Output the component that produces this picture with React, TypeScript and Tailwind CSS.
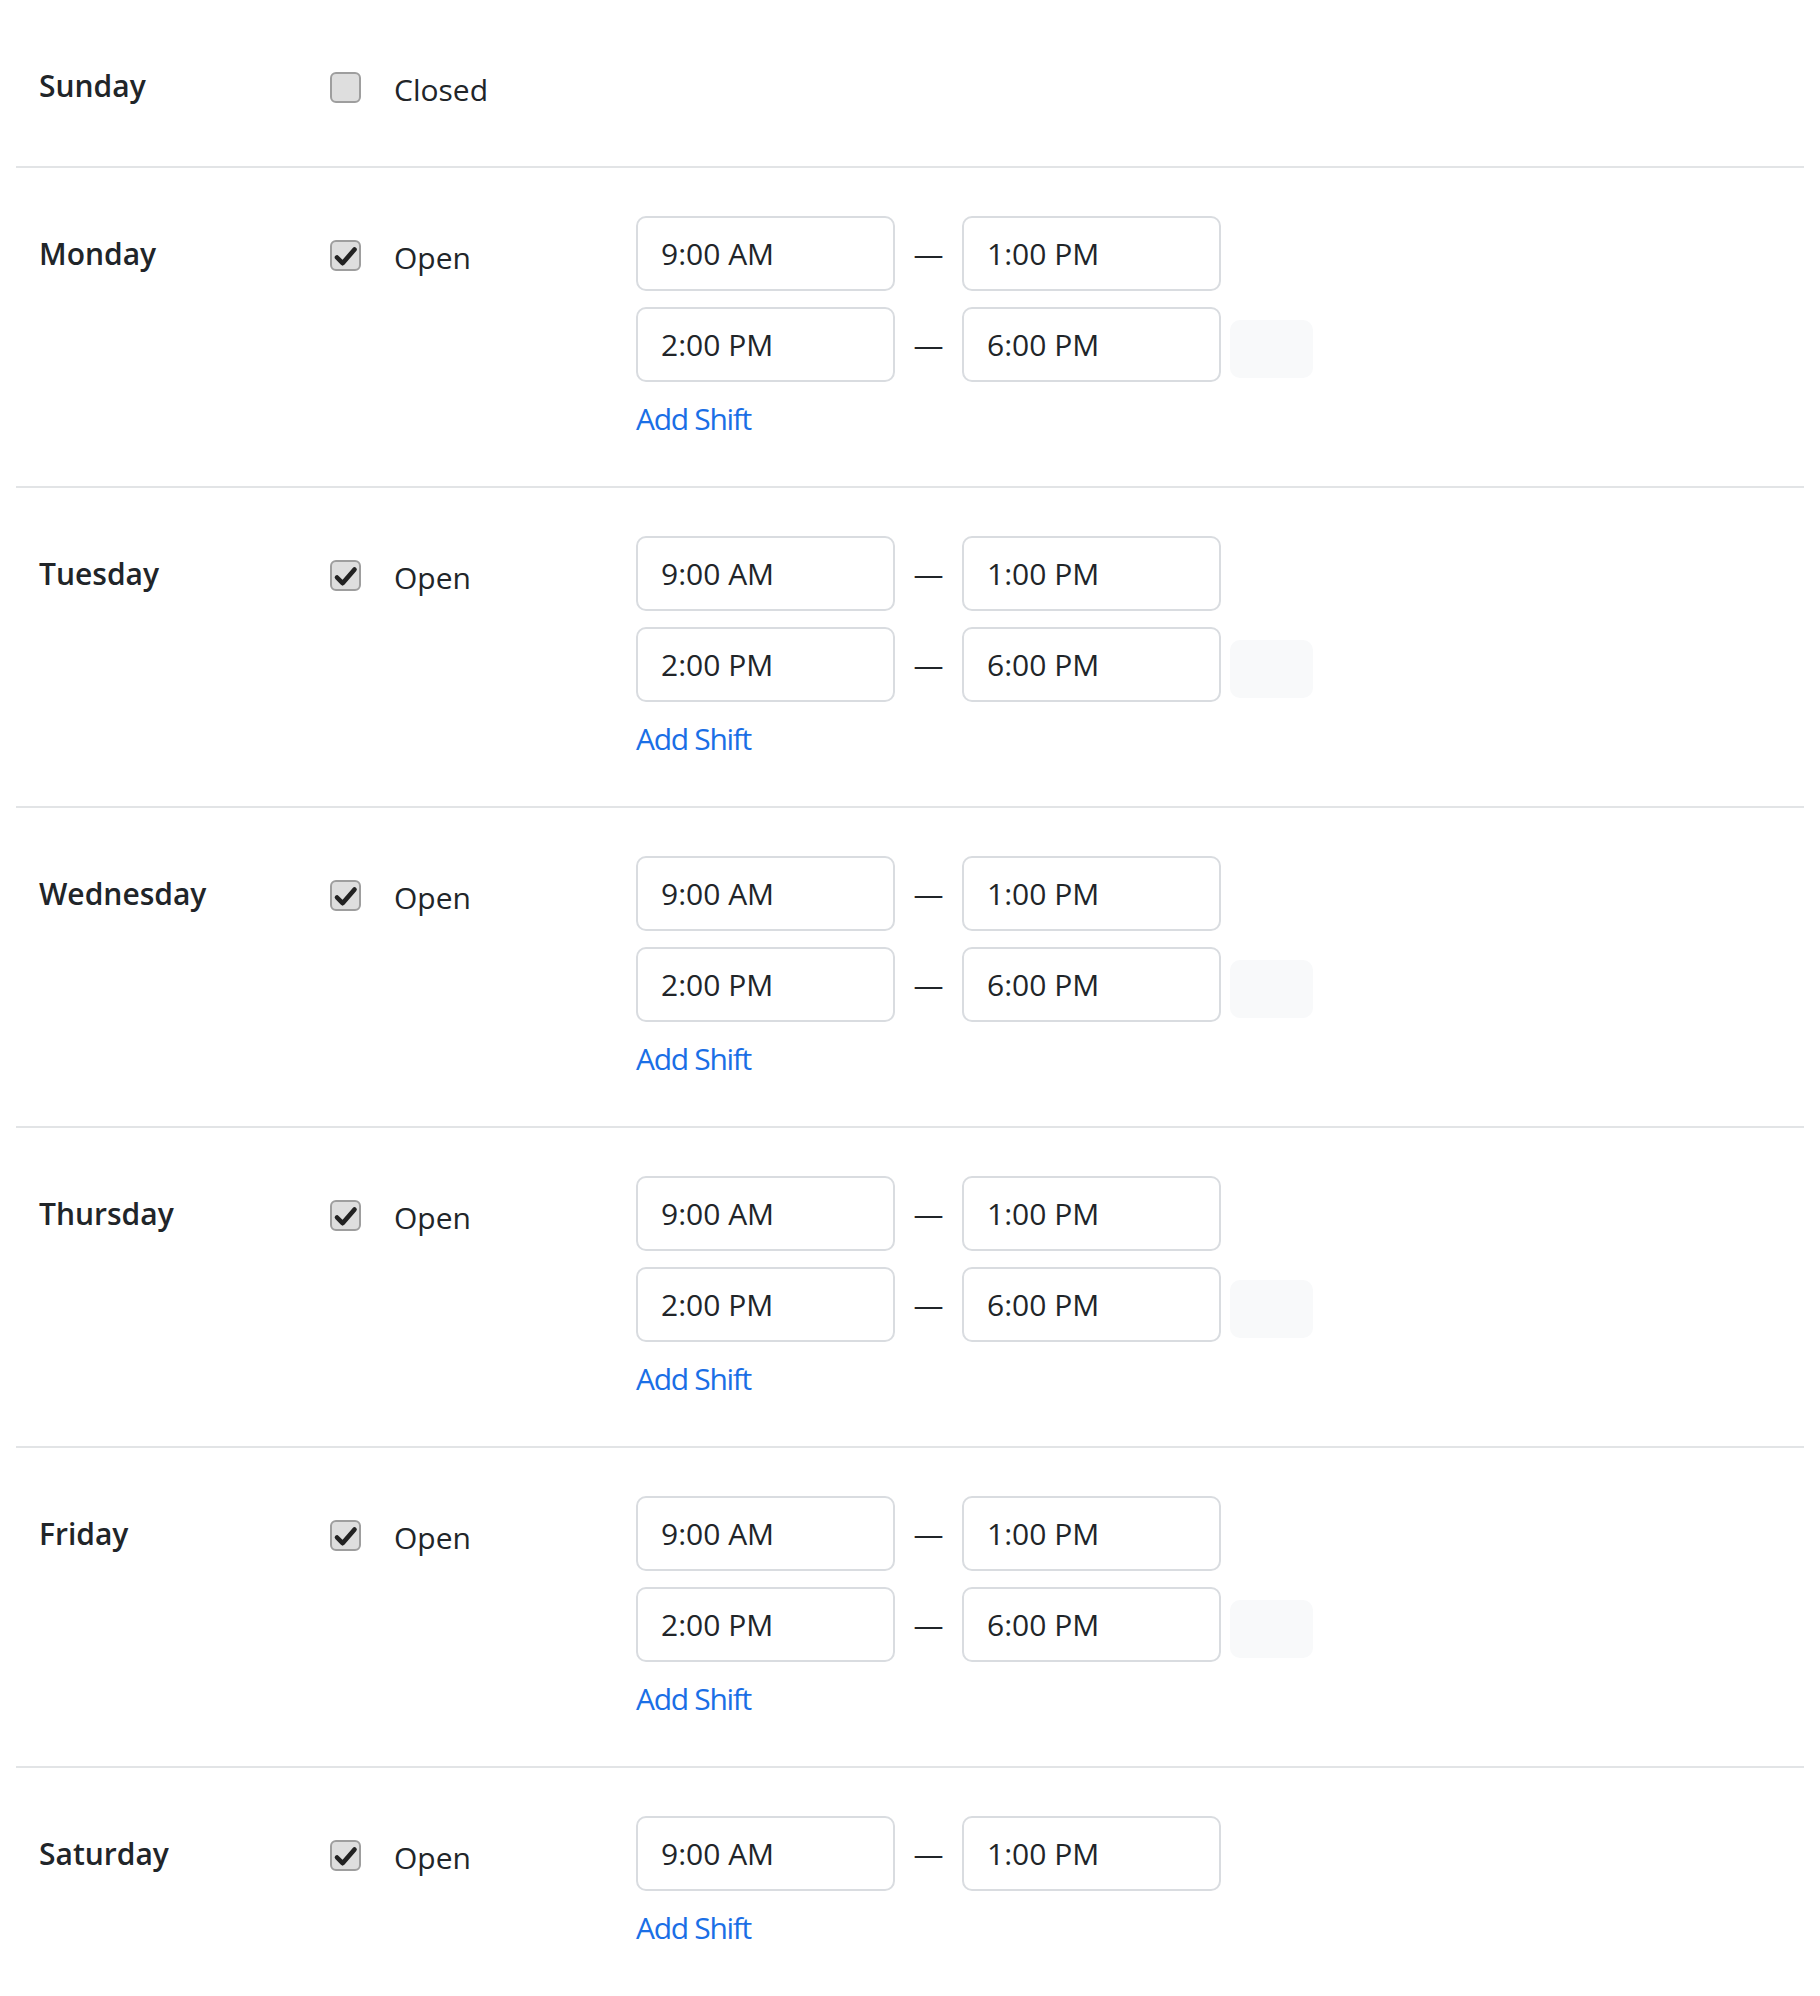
import React from 'react'

type Shift = [string, string]

interface Day {
  name: string
  open: boolean
  shifts: Shift[]
}

const days: Day[] = [
  { name: 'Sunday', open: false, shifts: [] },
  { name: 'Monday', open: true, shifts: [['9:00 AM', '1:00 PM'], ['2:00 PM', '6:00 PM']] },
  { name: 'Tuesday', open: true, shifts: [['9:00 AM', '1:00 PM'], ['2:00 PM', '6:00 PM']] },
  { name: 'Wednesday', open: true, shifts: [['9:00 AM', '1:00 PM'], ['2:00 PM', '6:00 PM']] },
  { name: 'Thursday', open: true, shifts: [['9:00 AM', '1:00 PM'], ['2:00 PM', '6:00 PM']] },
  { name: 'Friday', open: true, shifts: [['9:00 AM', '1:00 PM'], ['2:00 PM', '6:00 PM']] },
  { name: 'Saturday', open: true, shifts: [['9:00 AM', '1:00 PM']] },
]

function Checkbox({ checked }: { checked: boolean }) {
  return (
    <span className="mt-6 flex h-[31px] w-[31px] shrink-0 items-center justify-center rounded-[6px] border-2 border-[#9e9e9e] bg-[#dedede]">
      {checked && (
        <svg width="31" height="31" viewBox="0 0 31 31" className="-m-[2px]">
          <path
            d="M7 17.5 L12.6 23.2 L24.5 9.5"
            fill="none"
            stroke="#222"
            strokeWidth={4.6}
            strokeLinecap="round"
            strokeLinejoin="round"
          />
        </svg>
      )}
    </span>
  )
}

function TimeInput({ value }: { value: string }) {
  return (
    <input
      type="text"
      readOnly
      defaultValue={value}
      className="h-[75px] w-[259px] rounded-[10px] border-2 border-[#d9dce0] bg-white pl-[23px] text-[30px] text-[#212529] outline-none"
    />
  )
}

function DayRow({ day, last }: { day: Day; last: boolean }) {
  return (
    <div
      className={
        last
          ? 'flex pl-[23px] pt-12 pb-[45px]'
          : 'flex pl-[23px] pt-12 pb-[45px] border-b-2 border-[#e2e4e6]'
      }
    >
      {/* Day label */}
      <div className="min-h-[73px] w-[291px] shrink-0 pt-[15px] font-semibold leading-[45px] text-[#212529]">
        {day.name}
      </div>

      {/* Open / closed toggle */}
      <div className="flex w-[306px] shrink-0 items-start">
        <Checkbox checked={day.open} />
        <span className="ml-[33px] mt-[19px] leading-[45px] text-[#212529]">
          {day.open ? 'Open' : 'Closed'}
        </span>
      </div>

      {/* Shifts */}
      {day.open && (
        <div className="flex flex-col">
          <div className="flex flex-col gap-4">
            {day.shifts.map(([from, to], i) => (
              <div key={i} className="flex items-start">
                <TimeInput value={from} />
                <span className="mx-[18px] w-[31px] text-center leading-[75px] text-[#212529]">—</span>
                <TimeInput value={to} />
                {i > 0 && (
                  <button
                    type="button"
                    className="ml-[9px] mt-[13px] h-[58px] w-[83px] rounded-[10px] bg-[#f8f9fa]"
                  />
                )}
              </div>
            ))}
          </div>
          <a href="#" className="mt-[14px] w-fit leading-[45px] tracking-[-1.3px] text-[#1a6fe6]">
            Add Shift
          </a>
        </div>
      )}
    </div>
  )
}

export default function App() {
  return (
    <div className="min-h-screen bg-white px-4 font-['Open_Sans','Noto_Sans',sans-serif] text-[30px]">
      {days.map((day, i) => (
        <DayRow key={day.name} day={day} last={i === days.length - 1} />
      ))}
    </div>
  )
}
